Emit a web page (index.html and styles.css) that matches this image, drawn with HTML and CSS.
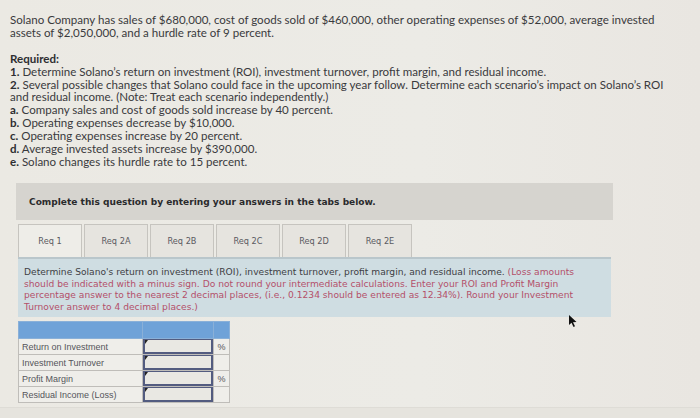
FILE: index.html
```html
<!DOCTYPE html>
<html>
<head>
<meta charset="utf-8">
<link rel="stylesheet" href="styles.css">
</head>
<body>
<div class="page">
  <p class="intro">Solano Company has sales of $680,000, cost of goods sold of $460,000, other operating expenses of $52,000, average invested<br>assets of $2,050,000, and a hurdle rate of 9 percent.</p>
  <div class="required">
    <div class="req-title">Required:</div>
    <div><b>1.</b> Determine Solano’s return on investment (ROI), investment turnover, profit margin, and residual income.</div>
    <div><b>2.</b> Several possible changes that Solano could face in the upcoming year follow. Determine each scenario’s impact on Solano’s ROI<br>and residual income. (Note: Treat each scenario independently.)</div>
    <div><b>a.</b> Company sales and cost of goods sold increase by 40 percent.</div>
    <div><b>b.</b> Operating expenses decrease by $10,000.</div>
    <div><b>c.</b> Operating expenses increase by 20 percent.</div>
    <div><b>d.</b> Average invested assets increase by $390,000.</div>
    <div><b>e.</b> Solano changes its hurdle rate to 15 percent.</div>
  </div>
  <div class="instruction">Complete this question by entering your answers in the tabs below.</div>
  <div class="tabs">
    <div class="tab active">Req 1</div>
    <div class="tab">Req 2A</div>
    <div class="tab">Req 2B</div>
    <div class="tab">Req 2C</div>
    <div class="tab">Req 2D</div>
    <div class="tab">Req 2E</div>
  </div>
  <div class="panel">Determine Solano's return on investment (ROI), investment turnover, profit margin, and residual income. <span class="note">(Loss amounts<br>should be indicated with a minus sign. Do not round your intermediate calculations. Enter your ROI and Profit Margin<br>percentage answer to the nearest 2 decimal places, (i.e., 0.1234 should be entered as 12.34%). Round your Investment<br>Turnover answer to 4 decimal places.)</span></div>
  <table class="answers">
    <tr class="head"><th class="c-label"></th><th class="c-input"></th><th class="c-unit"></th></tr>
    <tr><td class="c-label">Return on Investment</td><td class="c-input"><div class="field"></div></td><td class="c-unit">%</td></tr>
    <tr><td class="c-label">Investment Turnover</td><td class="c-input"><div class="field"></div></td><td class="c-unit"></td></tr>
    <tr><td class="c-label">Profit Margin</td><td class="c-input"><div class="field"></div></td><td class="c-unit">%</td></tr>
    <tr><td class="c-label">Residual Income (Loss)</td><td class="c-input"><div class="field"></div></td><td class="c-unit"></td></tr>
  </table>
</div>
<svg class="cursor" width="9" height="13" viewBox="0 0 9 13"><path d="M1 0 L1 10 L3.5 7.8 L5.5 12 L7 11.3 L5 7.2 L8.5 7 Z" fill="#111"/></svg>
<div class="bottom-edge"></div>
</body>
</html>
```
FILE: styles.css
```css
html, body {
  margin: 0;
  padding: 0;
}
body {
  width: 700px;
  height: 418px;
  overflow: hidden;
  background: linear-gradient(90deg, #ebe9e3 0%, #ecebe6 60%, #e9e6e1 100%);
  position: relative;
  font-family: Lato, "Liberation Sans", sans-serif;
  color: #3a3a3d;
}
.page {
  padding: 14px 0 0 10px;
}
.intro {
  margin: 0;
  font-size: 11.55px;
  line-height: 12.8px;
}
.required {
  margin-top: 13px;
  font-size: 11.55px;
  line-height: 12.95px;
}
.required b, .req-title {
  font-weight: 700;
  color: #2e2e31;
}
.instruction {
  margin: 14px 0 0 6px;
  width: 584px;
  height: 37px;
  padding-left: 13px;
  display: flex;
  align-items: center;
  background: #d6d4cf;
  font-family: "DejaVu Sans", sans-serif;
  font-weight: 700;
  font-size: 9.05px;
  color: #2a2a2c;
}
.tabs {
  display: flex;
  gap: 2px;
  margin: 4px 0 0 8px;
}
.tab {
  width: 62px;
  height: 32px;
  border: 1px solid #c6c4bf;
  border-bottom: none;
  background: #e6e4df;
  display: flex;
  align-items: center;
  justify-content: center;
  font-family: "DejaVu Sans", sans-serif;
  font-size: 8.2px;
  color: #5a5a5f;
}
.tab.active {
  background: #eeede8;
}
.panel {
  margin-left: 8px;
  width: 581px;
  height: 44px;
  padding: 8px 6px 6px 6px;
  background: #cfdde2;
  border-top: 2px solid #b9c6cb;
  font-family: "DejaVu Sans", sans-serif;
  font-size: 9.15px;
  line-height: 11.5px;
  color: #3e3e44;
}
.note {
  color: #b4506a;
}
.answers {
  margin: 4px 0 0 8px;
  border-collapse: collapse;
  font-family: "Liberation Sans", Arial, sans-serif;
  font-size: 9px;
  color: #55555a;
}
.answers td, .answers th {
  padding: 0;
  border: 1px solid #bfbdb9;
}
.answers .head th {
  height: 16px;
  background: #6fa2d8;
  border-color: #8ab0d8;
}
.c-label {
  width: 120px;
  padding-left: 3px !important;
  height: 14px;
  background: #efeeea;
}
.c-input {
  width: 70px;
  background: #eceae6;
}
.c-unit {
  width: 15px;
  text-align: center;
  background: #efeeea;
}
.field {
  height: 12px;
  border: 2px solid #535c80;
  border-top-width: 1px;
  background: #e9e8e3;
  position: relative;
}
.field::before {
  content: "";
  position: absolute;
  left: 0;
  top: 0;
  border-top: 4px solid #222;
  border-right: 3px solid transparent;
}
.cursor {
  position: absolute;
  left: 568px;
  top: 315px;
}
.bottom-edge {
  position: absolute;
  left: 0;
  right: 0;
  top: 407px;
  bottom: 0;
  background: #e6e4de;
  border-top: 1px solid #dedcd6;
}
```
